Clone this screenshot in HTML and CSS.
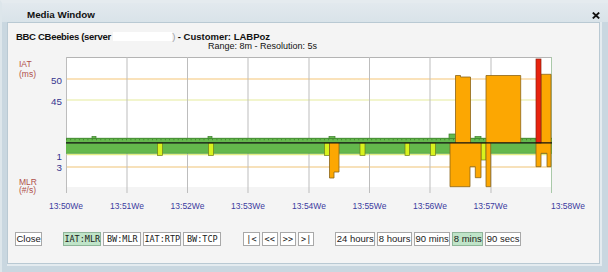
FILE: index.html
```html
<!DOCTYPE html>
<html>
<head>
<meta charset="utf-8">
<link rel="stylesheet" href="styles.css">
</head>
<body>
<div class="window">
  <div class="titlebar">
    <span class="title">Media Window</span>
    <svg class="close-x" width="8" height="7" viewBox="0 0 8 7"><path d="M0.8 0.6 L7.2 6.4 M7.2 0.6 L0.8 6.4" stroke="#111" stroke-width="1.9"/></svg>
  </div>
  <div class="panel">
    <div class="subtitle">BBC CBeebies (server <span class="redact"></span><span class="paren">)</span><span class="cust"> - Customer: LABPoz</span></div>
    <div class="range">Range: 8m - Resolution: 5s</div>
    <svg class="chart" width="591" height="160" viewBox="8 52 591 160">
      <rect x="66" y="57" width="486" height="130" fill="#ffffff"/>
      <line x1="66" y1="57.5" x2="552" y2="57.5" stroke="#b4b4b4" stroke-width="1"/>
      <g stroke-width="1.4">
        <line x1="66" y1="79" x2="552" y2="79" stroke="#f8d9a3"/>
        <line x1="66" y1="100" x2="552" y2="100" stroke="#eef2bd"/>
        <line x1="66" y1="154.5" x2="552" y2="154.5" stroke="#e4ee84"/>
        <line x1="66" y1="167" x2="552" y2="167" stroke="#f5d7a3"/>
      </g>
      <g stroke="#bdbdbd" stroke-width="1">
        <line x1="66.5" y1="57" x2="66.5" y2="193"/>
        <line x1="127" y1="57" x2="127" y2="193"/>
        <line x1="187.5" y1="57" x2="187.5" y2="193"/>
        <line x1="248" y1="57" x2="248" y2="193"/>
        <line x1="309" y1="57" x2="309" y2="193"/>
        <line x1="369.5" y1="57" x2="369.5" y2="193"/>
        <line x1="430" y1="57" x2="430" y2="193"/>
        <line x1="491" y1="57" x2="491" y2="193"/>
        <line x1="551.5" y1="57" x2="551.5" y2="193" stroke="#a9c9a9"/>
      </g>
      <!-- green band -->
      <rect x="66" y="138" width="486" height="15.5" fill="#64b84c"/>
      <line x1="66" y1="138.3" x2="552" y2="138.3" stroke="#3c7f2c" stroke-width="0.8"/>
      <line x1="66" y1="139.6" x2="552" y2="139.6" stroke="#3c7f2c" stroke-width="1.4" stroke-dasharray="0.8 3.5"/>
      <line x1="66" y1="153.3" x2="552" y2="153.3" stroke="#4f9a3a" stroke-width="0.6"/>
      <g fill="#64b84c" stroke="#3c7f2c" stroke-width="0.7">
        <rect x="92" y="136.5" width="4" height="2"/>
        <rect x="208" y="136.5" width="4" height="2"/>
        <rect x="329" y="136.5" width="6" height="2"/>
        <rect x="449" y="134" width="7" height="4.5"/>
        <rect x="475" y="136.5" width="6" height="2"/>
      </g>
      <!-- yellow spikes -->
      <g fill="#d8f21d" stroke="#6f7d1c" stroke-width="0.7">
        <rect x="157.5" y="143" width="5" height="12.5"/>
        <rect x="208.5" y="143" width="5" height="12.5"/>
        <rect x="324.5" y="143" width="5" height="12.5"/>
        <rect x="360" y="143" width="5" height="12.5"/>
        <rect x="405" y="143" width="4.5" height="12.5"/>
        <rect x="430.5" y="143" width="5" height="12.5"/>
        <rect x="481" y="143" width="5" height="17"/>
      </g>
      <!-- orange -->
      <g fill="#fca702" stroke="#8a6519" stroke-width="0.8">
        <path d="M329.5 143 V178 H334 V172 H339 V143"/>
        <path d="M450 143 V186.7 H470 V166.7 H475.3 V177.7 H481 V143"/>
        <path d="M486 143 V186.7 H490.7 V143"/>
        <path d="M455.5 143 V75.5 H460.5 V77 H470.5 V143"/>
        <path d="M486 143 V75.5 H520.7 V143"/>
        <path d="M541 143 V74.3 H551 V143"/>
        <path d="M536 143 V166.7 H541 V153.3 H547 V166.7 H551 V143"/>
      </g>
      <rect x="536" y="59" width="5" height="84" fill="#e8230e" stroke="#8a2010" stroke-width="0.7"/>
      <line x1="66" y1="142.8" x2="552" y2="142.8" stroke="#111" stroke-width="1.3"/>
      <!-- axis labels -->
      <g class="unit">
        <text x="19" y="67">IAT</text>
        <text x="19" y="76.5">(ms)</text>
        <text x="19" y="184.5">MLR</text>
        <text x="19" y="193">(#/s)</text>
      </g>
      <g class="num" text-anchor="end">
        <text x="62" y="83.5">50</text>
        <text x="62" y="104.5">45</text>
        <text x="62" y="160">1</text>
        <text x="62" y="171">3</text>
      </g>
      <g class="time" text-anchor="middle">
        <text x="66" y="208.5">13:50We</text>
        <text x="127" y="208.5">13:51We</text>
        <text x="187.5" y="208.5">13:52We</text>
        <text x="248" y="208.5">13:53We</text>
        <text x="309" y="208.5">13:54We</text>
        <text x="369.5" y="208.5">13:55We</text>
        <text x="430" y="208.5">13:56We</text>
        <text x="490.5" y="208.5">13:57We</text>
        <text x="551" y="208.5" text-anchor="start">13:58We</text>
      </g>
    </svg>
    <div class="controls">
      <button class="btn sans">Close</button>
      <div class="group g1">
        <button class="btn mono fixed selected">IAT:MLR</button>
        <button class="btn mono fixed">BW:MLR</button>
        <button class="btn mono fixed">IAT:RTP</button>
        <button class="btn mono fixed">BW:TCP</button>
      </div>
      <div class="group g2">
        <button class="btn mono nav">|&lt;</button>
        <button class="btn mono nav">&lt;&lt;</button>
        <button class="btn mono nav">&gt;&gt;</button>
        <button class="btn mono nav">&gt;|</button>
      </div>
      <div class="group g3">
        <button class="btn sans">24 hours</button>
        <button class="btn sans">8 hours</button>
        <button class="btn sans">90 mins</button>
        <button class="btn sans selected">8 mins</button>
        <button class="btn sans">90 secs</button>
      </div>
    </div>
  </div>
</div>
</body>
</html>
```
FILE: styles.css
```css
html, body {
  margin: 0;
  padding: 0;
}
body {
  width: 608px;
  height: 272px;
  overflow: hidden;
  background: #cbd8e0;
  font-family: "Liberation Sans", Arial, sans-serif;
  color: #111;
}
.window {
  width: 608px;
  height: 272px;
  box-sizing: border-box;
  display: flex;
  flex-direction: column;
  background: #c9d7e0;
  border-top: 3px solid #e5ebef;
  border-left: 2px solid #dde6eb;
}
.titlebar {
  height: 19px;
  box-sizing: border-box;
  display: flex;
  align-items: flex-start;
  justify-content: space-between;
  padding: 6px 8px 0 25px;
  background: linear-gradient(#e2e9ee, #d9e3e9);
}
.title {
  font-weight: bold;
  font-size: 9.8px;
  line-height: 12px;
  color: #111;
}
.close-x {
  display: block;
  margin-top: 3px;
}
.panel {
  height: 242px;
  box-sizing: border-box;
  margin: 0 8px 8px 5px;
  background: #f4f4f4;
  border: 1px solid #b9c9d3;
  box-shadow: 1px 1px 0 1px #e4ebef;
}
.subtitle {
  margin-top: 8px;
  padding-left: 8px;
  height: 10px;
  line-height: 11px;
  font-size: 9.5px;
  font-weight: bold;
  letter-spacing: -0.3px;
  white-space: nowrap;
}
.cust {
  letter-spacing: 0;
}
.redact {
  display: inline-block;
  width: 59px;
  height: 9px;
  background: #ffffff;
  vertical-align: -1px;
}
.paren {
  color: #9aa0a6;
  font-weight: normal;
}
.range {
  padding-left: 200px;
  line-height: 11px;
  height: 11px;
  font-size: 9px;
  white-space: nowrap;
}
.chart {
  display: block;
}
.chart text {
  font-family: "Liberation Sans", Arial, sans-serif;
}
.unit text {
  font-size: 8.5px;
  fill: #b0504a;
}
.num text {
  font-size: 9.8px;
  fill: #35358f;
}
.time text {
  font-size: 8.5px;
  fill: #3b3ba0;
}
.controls {
  margin-top: 20px;
  padding-left: 7px;
  display: flex;
  align-items: center;
}
.group {
  display: flex;
  gap: 2px;
}
.g1 { margin-left: 21px; }
.g2 { margin-left: 22px; }
.g3 { margin-left: 21px; }
.btn {
  margin: 0;
  height: 14px;
  box-sizing: border-box;
  padding: 0 1px;
  border: 1px solid #a8a8a8;
  background: #ffffff;
  color: #1a1a1a;
  line-height: 12px;
  border-radius: 0;
  white-space: nowrap;
}
.sans {
  font-family: "Liberation Sans", Arial, sans-serif;
  font-size: 9.5px;
  padding: 0 0.5px;
}
.mono {
  font-family: "DejaVu Sans Mono", "Liberation Mono", monospace;
  font-size: 8.5px;
}
.fixed {
  width: 38px;
  padding: 0;
}
.nav {
  padding: 0 2px;
}
.selected {
  background: #bfe4c8;
  border-color: #8fb59a;
}
```
